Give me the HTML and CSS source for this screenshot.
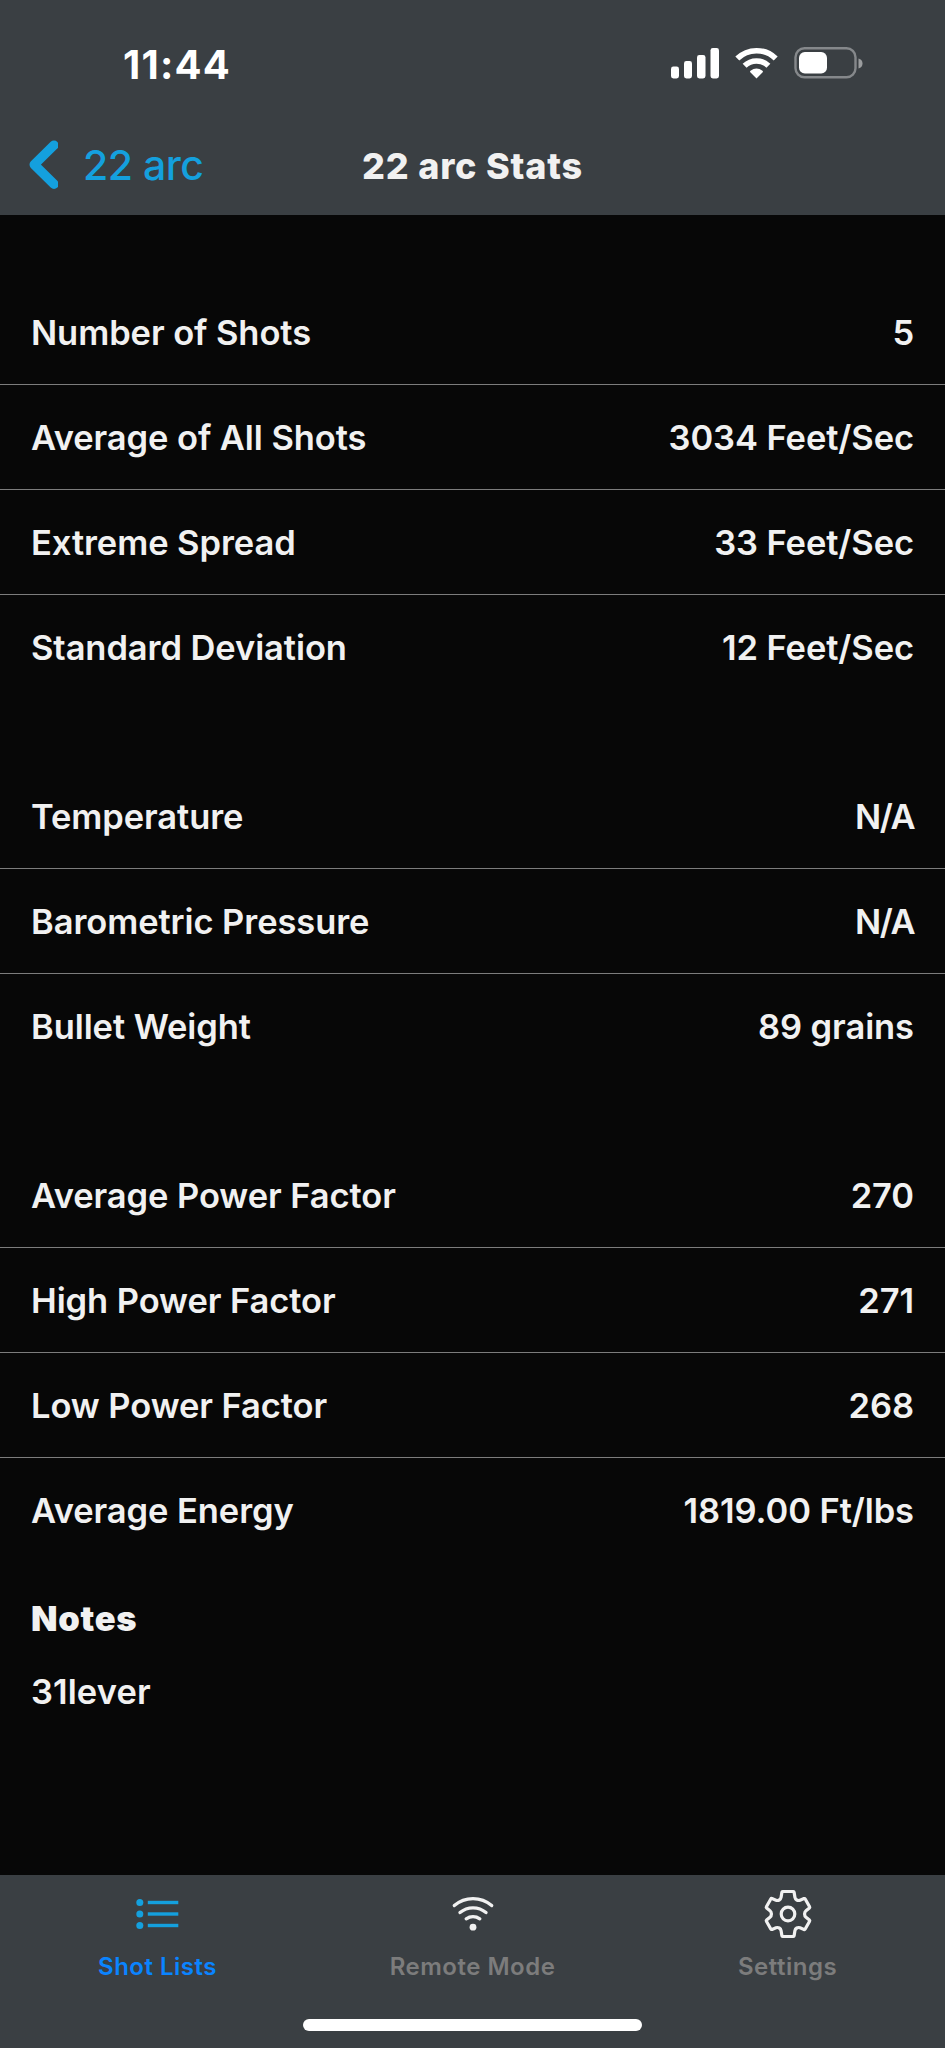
FILE: index.html
```html
<!DOCTYPE html>
<html lang="en">
  <head>
    <meta charset="UTF-8" />
    <meta name="viewport" content="width=device-width, initial-scale=1.0" />
    <title>22 arc Stats</title>
    <link rel="stylesheet" href="styles.css" />
  </head>
  <body>
    <header class="header">
      <div class="status-bar">
        <span class="time">11:44</span>
        <svg class="status-icons" width="194" height="34" viewBox="0 0 194 34">
          <g fill="#fff">
            <rect x="1" y="19.5" width="8" height="12" rx="2.4" />
            <rect x="14" y="14" width="8" height="17.5" rx="2.4" />
            <rect x="27" y="8" width="8.5" height="23.5" rx="2.4" />
            <rect x="40.5" y="1" width="8.5" height="30.5" rx="2.4" />
            <path d="M86.5 31.5l-6.2-6.3q-.7-.8.2-1.4q6-4.4 12 0q.9.6.2 1.4z" />
          </g>
          <g fill="none" stroke="#fff" stroke-width="5.6">
            <path d="M67.3 11.6a27.3 27.3 0 0 1 38.4 0" />
            <path d="M74.6 18.8a17 17 0 0 1 23.8 0" />
          </g>
          <rect x="125.5" y="1.3" width="60" height="29" rx="9" fill="none" stroke="#85888b" stroke-width="2.4" />
          <rect x="129" y="5" width="28" height="21.5" rx="5.8" fill="#fff" />
          <path d="M188.5 11.4q4 1.2 4 5t-4 5z" fill="#9b9d9f" />
        </svg>
      </div>
      <nav class="nav-bar">
        <a class="back">
          <svg width="30" height="50" viewBox="0 0 30 50">
            <path d="M26 5.2L6.2 24.6L26 44.2" fill="none" stroke="#14a0de" stroke-width="9.4" stroke-linecap="round" stroke-linejoin="round" />
          </svg>
          <span>22 arc</span>
        </a>
        <h1>22 arc Stats</h1>
      </nav>
    </header>

    <main>
      <ul class="group">
        <li><span>Number of Shots</span><span>5</span></li>
        <li><span>Average of All Shots</span><span>3034 Feet/Sec</span></li>
        <li><span>Extreme Spread</span><span>33 Feet/Sec</span></li>
        <li><span>Standard Deviation</span><span>12 Feet/Sec</span></li>
      </ul>

      <ul class="group">
        <li><span>Temperature</span><span class="tight">N/A</span></li>
        <li><span>Barometric Pressure</span><span class="tight">N/A</span></li>
        <li><span>Bullet Weight</span><span>89 grains</span></li>
      </ul>

      <ul class="group">
        <li><span>Average Power Factor</span><span>270</span></li>
        <li><span>High Power Factor</span><span>271</span></li>
        <li><span>Low Power Factor</span><span>268</span></li>
        <li><span>Average Energy</span><span>1819.00 Ft/lbs</span></li>
      </ul>

      <section class="notes">
        <h2>Notes</h2>
        <p>31lever</p>
      </section>
    </main>

    <footer class="tab-bar">
      <div class="tabs">
        <a class="tab active">
          <svg width="50" height="50" viewBox="0 0 50 50">
            <g fill="#14a0de">
              <circle cx="6.8" cy="13.5" r="3.5" />
              <circle cx="6.8" cy="25" r="3.5" />
              <circle cx="6.8" cy="36.5" r="3.5" />
              <rect x="14.8" y="11.8" width="30.5" height="3.4" />
              <rect x="14.8" y="23.3" width="30.5" height="3.4" />
              <rect x="14.8" y="34.8" width="30.5" height="3.4" />
            </g>
          </svg>
          <span>Shot Lists</span>
        </a>
        <a class="tab">
          <svg width="50" height="50" viewBox="0 0 50 50">
            <g fill="none" stroke="#f1f1f1" stroke-width="3.3" stroke-linecap="round">
              <path d="M6.3 16.6a28.6 28.6 0 0 1 37.4 0" />
              <path d="M12 23.6a20 20 0 0 1 26 0" />
              <path d="M18.2 29.8a12 12 0 0 1 13.6 0" />
            </g>
            <circle cx="25" cy="38.2" r="3.4" fill="#f1f1f1" />
          </svg>
          <span>Remote Mode</span>
        </a>
        <a class="tab">
          <svg width="50" height="50" viewBox="0 0 50 50">
            <g fill="none" stroke="#f1f1f1" stroke-width="3.2" stroke-linejoin="round">
              <path d="M19.6 2.5H30.4Q31 2.5 31.1 3.2L31.9 8.3C32.3 10.7 34.8 12.1 37 11.2L41 9.6Q41.8 9.3 42.2 10L46.6 17.8Q47 18.5 46.4 19L43 21.7C41.1 23.2 41.1 26.8 43 28.3L46.4 31Q47 31.5 46.6 32.2L42.2 40Q41.8 40.7 41 40.4L37 38.8C34.8 37.9 32.3 39.3 31.9 41.7L31.1 46.8Q31 47.5 30.4 47.5H19.6Q19 47.5 18.9 46.8L18.1 41.7C17.7 39.3 15.2 37.9 13 38.8L9 40.4Q8.2 40.7 7.8 40L3.4 32.2Q3 31.5 3.6 31L7 28.3C8.9 26.8 8.9 23.2 7 21.7L3.6 19Q3 18.5 3.4 17.8L7.8 10Q8.2 9.3 9 9.6L13 11.2C15.2 12.1 17.7 10.7 18.1 8.3L18.9 3.2Q19 2.5 19.6 2.5Z" />
              <circle cx="25" cy="25" r="6.8" />
            </g>
          </svg>
          <span>Settings</span>
        </a>
      </div>
      <div class="home-indicator"></div>
    </footer>
  </body>
</html>
```
FILE: styles.css
```css
* {
  margin: 0;
  padding: 0;
  box-sizing: border-box;
}

body {
  display: flex;
  flex-direction: column;
  height: 2048px;
  background-color: #070707;
  color: #f1f1f1;
  font-family: Inter, "Liberation Sans", sans-serif;
  overflow: hidden;
}

.header {
  height: 215px;
  background-color: #3a3f43;
}

.status-bar {
  display: flex;
  justify-content: space-between;
  align-items: center;
  height: 128px;
  padding: 0 81px 0 123px;
}

.time {
  color: #fff;
  font-size: 40px;
  font-weight: 700;
  letter-spacing: 1.2px;
}

.nav-bar {
  display: grid;
  grid-template-columns: 1fr auto 1fr;
  align-items: center;
  height: 73px;
  padding: 0 28px;
}

.back {
  display: flex;
  align-items: center;
  gap: 25px;
  color: #14a0de;
  font-size: 41px;
  font-weight: 500;
  letter-spacing: -0.5px;
}

h1 {
  font-size: 36px;
  font-weight: 800;
  letter-spacing: 0.8px;
  margin-top: 3px;
}

main {
  flex: 1;
  padding-top: 65px;
}

.group {
  list-style: none;
  margin-bottom: 65px;
}

.group li {
  display: flex;
  justify-content: space-between;
  align-items: center;
  height: 105px;
  padding: 0 31px;
  border-bottom: 1px solid #7c7c7c;
  font-size: 34.5px;
  font-weight: 600;
  letter-spacing: -0.08px;
}

.group li:last-child {
  height: 104px;
  border-bottom: none;
}

.group .tight {
  letter-spacing: -1.5px;
}

.notes {
  margin-top: -65px;
  padding: 36px 31px 0;
}

h2 {
  font-size: 34.5px;
  font-weight: 900;
  line-height: 42px;
  letter-spacing: 0.7px;
}

.notes p {
  margin-top: 31px;
  font-size: 34.5px;
  font-weight: 600;
  line-height: 42px;
  letter-spacing: 0.1px;
}

.tab-bar {
  height: 173px;
  background-color: #3a3f43;
}

.tabs {
  display: grid;
  grid-template-columns: repeat(3, 1fr);
  height: 144px;
}

.tab {
  display: flex;
  flex-direction: column;
  align-items: center;
  padding-top: 14px;
  gap: 13px;
  color: #7c7c7c;
  font-size: 24px;
  font-weight: 600;
  line-height: 30px;
  letter-spacing: 0.5px;
}

.tab.active {
  color: #0a84ff;
}

.home-indicator {
  width: 339px;
  height: 12px;
  margin: 0 auto;
  border-radius: 6px;
  background-color: #fff;
}
```
